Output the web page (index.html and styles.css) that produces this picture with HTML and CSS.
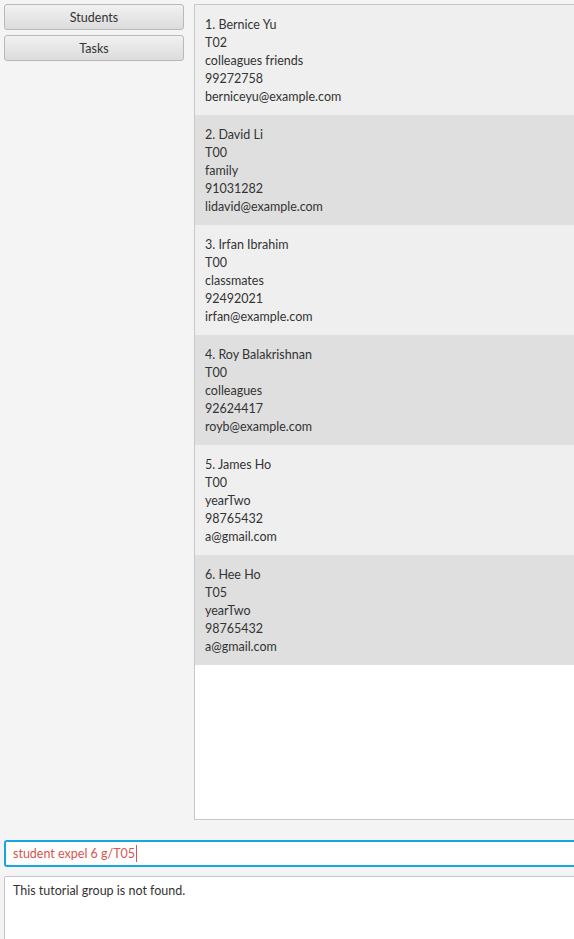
FILE: index.html
```html
<!DOCTYPE html>
<html>
<head>
<meta charset="utf-8">
<link rel="stylesheet" href="styles.css">
</head>
<body>
<div class="app">
  <div class="main">
    <div class="sidebar">
      <button class="nav-btn">Students</button>
      <button class="nav-btn">Tasks</button>
    </div>
    <div class="list">
      <div class="cell odd">
        <div>1. Bernice Yu</div><div>T02</div><div>colleagues friends</div><div>99272758</div><div>berniceyu@example.com</div>
      </div>
      <div class="cell even">
        <div>2. David Li</div><div>T00</div><div>family</div><div>91031282</div><div>lidavid@example.com</div>
      </div>
      <div class="cell odd">
        <div>3. Irfan Ibrahim</div><div>T00</div><div>classmates</div><div>92492021</div><div>irfan@example.com</div>
      </div>
      <div class="cell even">
        <div>4. Roy Balakrishnan</div><div>T00</div><div>colleagues</div><div>92624417</div><div>royb@example.com</div>
      </div>
      <div class="cell odd">
        <div>5. James Ho</div><div>T00</div><div>yearTwo</div><div>98765432</div><div>a@gmail.com</div>
      </div>
      <div class="cell even">
        <div>6. Hee Ho</div><div>T05</div><div>yearTwo</div><div>98765432</div><div>a@gmail.com</div>
      </div>
    </div>
  </div>
  <div class="command"><span class="cmd-text">student expel 6 g/T05</span><span class="caret"></span></div>
  <div class="result">This tutorial group is not found.</div>
</div>
</body>
</html>
```
FILE: styles.css
```css
html, body {
  margin: 0;
  padding: 0;
  background: #f4f4f4;
  width: 574px;
  height: 939px;
  overflow: hidden;
}
body {
  font-family: "Lato", "DejaVu Sans", sans-serif;
  font-size: 12.5px;
  color: #333;
}
.app {
  width: 574px;
  height: 939px;
  display: flex;
  flex-direction: column;
}
.main {
  display: flex;
  padding: 4px 0 0 4px;
  gap: 10px;
  height: 816px;
}
.sidebar {
  width: 180px;
  display: flex;
  flex-direction: column;
  gap: 5px;
}
.nav-btn {
  height: 26px;
  width: 180px;
  border: 1px solid #b9b9b9;
  border-radius: 3px;
  background: linear-gradient(#f1f1f1, #dcdcdc);
  font-family: inherit;
  font-size: 12.5px;
  color: #333;
  padding: 0;
}
.list {
  flex: 1;
  margin-right: -10px;
  border: 1px solid #c8c8c8;
  background: #fff;
  height: 814px;
}
.cell {
  height: 110px;
  box-sizing: border-box;
  padding: 11px 0 0 10px;
  line-height: 18px;
  color: #333;
}
.odd { background: #efefef; }
.even { background: #dfdfdf; }
.command {
  margin: 20px -10px 0 4px;
  height: 27px;
  box-sizing: border-box;
  border: 2px solid #15a7de;
  border-radius: 3px;
  background: #fff;
  padding: 0 0 0 7px;
  display: flex;
  align-items: center;
  color: #d9534f;
}
.caret {
  width: 1px;
  height: 17px;
  background: #d9534f;
  margin-left: 1px;
}
.result {
  margin: 9px -10px 0 4px;
  flex: 1;
  border: 1px solid #c4c4c4;
  border-bottom: none;
  border-radius: 2px 2px 0 0;
  background: #fff;
  padding: 6px 0 0 8px;
  line-height: 16px;
}
```
